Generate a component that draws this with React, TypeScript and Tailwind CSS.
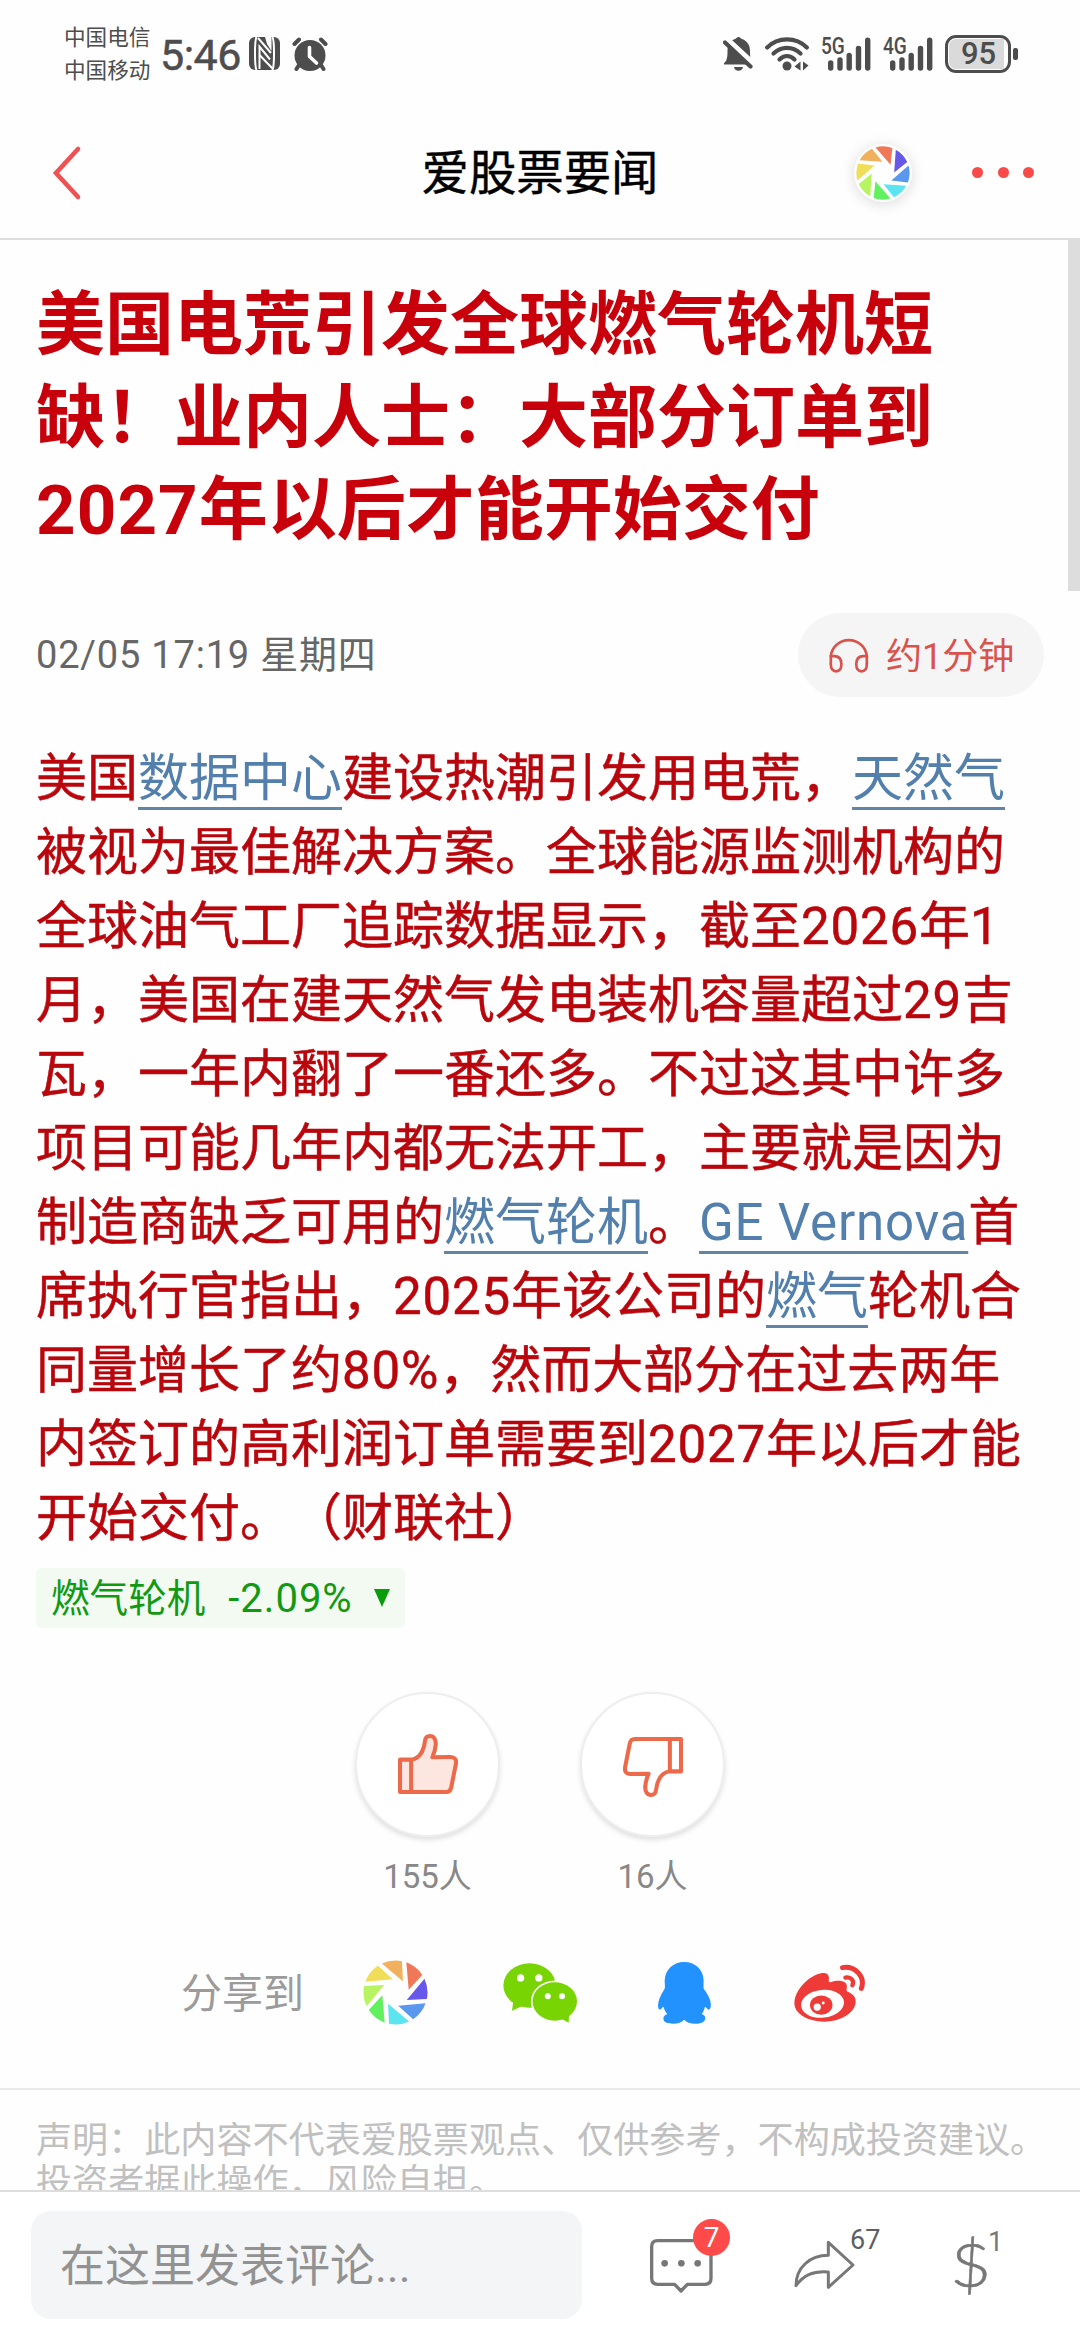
import React from 'react';

interface Segment {
  text: string;
  link?: boolean;
}

const titleLines = [
  '美国电荒引发全球燃气轮机短',
  '缺！业内人士：大部分订单到',
  '2027年以后才能开始交付',
];

const bodyLines: Segment[][] = [
  [
    { text: '美国' },
    { text: '数据中心', link: true },
    { text: '建设热潮引发用电荒，' },
    { text: '天然气', link: true },
  ],
  [{ text: '被视为最佳解决方案。全球能源监测机构的' }],
  [{ text: '全球油气工厂追踪数据显示，截至2026年1' }],
  [{ text: '月，美国在建天然气发电装机容量超过29吉' }],
  [{ text: '瓦，一年内翻了一番还多。不过这其中许多' }],
  [{ text: '项目可能几年内都无法开工，主要就是因为' }],
  [
    { text: '制造商缺乏可用的' },
    { text: '燃气轮机', link: true },
    { text: '。' },
    { text: 'GE Vernova', link: true },
    { text: '首' },
  ],
  [
    { text: '席执行官指出，2025年该公司的' },
    { text: '燃气', link: true },
    { text: '轮机合' },
  ],
  [{ text: '同量增长了约80%，然而大部分在过去两年' }],
  [{ text: '内签订的高利润订单需要到2027年以后才能' }],
  [{ text: '开始交付。（财联社）' }],
];

// latin runs sit a little looser than the chinese text
const Spaced: React.FC<{ text: string }> = ({ text }) => (
  <>
    {text.split(/([A-Za-z0-9% ]+)/).map((part, i) =>
      i % 2 === 1 ? (
        <span key={i} className="tracking-[0.016em]">
          {part}
        </span>
      ) : (
        part
      ),
    )}
  </>
);

// clockwise from the top right blade
const bladeColors = [
  '#f07858',
  '#6858ea',
  '#5a98f0',
  '#5ce4f0',
  '#60f060',
  '#b8f462',
  '#f0de58',
  '#f0b05e',
];

const Shutter: React.FC<{ className?: string; turn?: number }> = ({ className, turn = 0 }) => (
  <svg viewBox="-96 -96 192 192" className={className}>
    {bladeColors.map((color, i) => (
      <path
        key={color}
        d="M32 -89 A95 95 0 0 1 79 -52 L39 -8 Z"
        fill={color}
        transform={`rotate(${i * 45 + turn})`}
      />
    ))}
  </svg>
);

const NfcIcon = () => (
  <svg viewBox="0 0 31 33" className="h-[33px] w-[31px]">
    <rect width="31" height="33" rx="6" fill="#4d4d4d" />
    <g fill="none" stroke="#fff" strokeWidth="2">
      <path d="M7.500 0C6 3 6 8 6 16.500S6 30 7.500 33" />
      <path d="M23.500 0C25 3 25 8 25 16.500S25 30 23.500 33" />
      <path d="M10.500 32V9.500L21 22.500" />
      <path d="M9 1L22 16" />
      <path d="M10.500 18L24 32" />
    </g>
    <path d="M16 0h6.500v14L18 7z" fill="#fff" />
  </svg>
);

const AlarmIcon = () => (
  <svg viewBox="0 0 36 34" className="h-[34px] w-9">
    <g stroke="#4d4d4d" strokeWidth="4" strokeLinecap="round">
      <path d="M2.500 7L7 2.500M33.500 7L29 2.500M7 28L4.500 32M29 28l2.500 4" />
    </g>
    <circle cx="18" cy="18.500" r="15.500" fill="#4d4d4d" />
    <path
      d="M17.500 10.500v9l7 6.500"
      fill="none"
      stroke="#fff"
      strokeWidth="3.600"
      strokeLinecap="round"
      strokeLinejoin="round"
    />
  </svg>
);

const BellOffIcon = () => (
  <svg viewBox="0 0 30 34" className="h-[34px] w-[30px]">
    <path
      d="M15.500 0c1.500 0 2 1.500 3.500 2C24.500 4 27 8.500 27 14c0 6 .5 9 2 12v1.500H1V26c3-2 3.500-6 3.500-12 0-6 2.500-10 7.500-12 1.500-.5 2-2 3.500-2z"
      fill="#4d4d4d"
    />
    <path d="M11 30h9c-.5 2.500-2 3.800-4.500 3.800S11.500 32.500 11 30z" fill="#4d4d4d" />
    <path d="M0 -.5L32 29" stroke="#fff" strokeWidth="7" />
    <path d="M2 5.500L27.500 29.500" stroke="#4d4d4d" strokeWidth="4.200" strokeLinecap="round" />
  </svg>
);

const WifiIcon = () => (
  <svg viewBox="0 0 44 34" className="h-[34px] w-11">
    <g fill="none" stroke="#4d4d4d" strokeWidth="4.200" strokeLinecap="round">
      <path d="M2.200 10.500C13-.3 31-.3 41.800 10.500" />
      <path d="M8.500 16.500c8-7.500 19-7.500 27 0" />
      <path d="M14.500 22.500c4.500-4.500 10.500-4.500 15 0" />
    </g>
    <circle cx="22" cy="29" r="4.500" fill="#4d4d4d" />
    <path d="M35.500 24.500v9L29.500 29.500zM38 24.500v9l5.500-5z" fill="#4d4d4d" />
  </svg>
);

const Signal: React.FC<{ label: string }> = ({ label }) => (
  <div className="relative h-[34px] w-[50px]">
    <span className="absolute -top-[1px] left-0 origin-left scale-x-[0.83] text-[23px] leading-[22px] font-medium text-[#4d4d4d]">
      {label}
    </span>
    <svg viewBox="0 0 50 34" className="absolute inset-0 h-full w-full">
      <g stroke="#4d4d4d" strokeWidth="5.400" strokeLinecap="round">
        <path d="M9.700 26v5M19 23v8M28.200 18.500V31M37.500 11.500V31M46.700 3.200V31" />
      </g>
    </svg>
  </div>
);

const Battery = () => (
  <div className="flex items-center gap-[2px]">
    <div className="h-[38px] w-[66px] rounded-[11px] border-[3px] border-[#4d4d4d] p-[1px]">
      <div className="flex h-full w-[55px] items-center justify-center rounded-l-[7px] bg-[#dadada] pl-1 text-[31px] leading-none font-medium text-[#4d4d4d]">
        95
      </div>
    </div>
    <div className="h-3 w-[5px] rounded-[2px] bg-[#4d4d4d]" />
  </div>
);

const StatusBar = () => (
  <div className="flex h-[107px] shrink-0 items-center pl-[64px] text-[#4d4d4d]">
    <div className="w-[96px] text-[21.600px] leading-[33px]">
      <div>中国电信</div>
      <div>中国移动</div>
    </div>
    <div className="mt-[3px] w-[89px] text-[43px] leading-none -tracking-[0.500px] [-webkit-text-stroke:0.5px]">5:46</div>
    <NfcIcon />
    <div className="ml-3">
      <AlarmIcon />
    </div>
    <div className="mr-[62px] ml-auto flex items-center">
      <BellOffIcon />
      <div className="ml-3">
        <WifiIcon />
      </div>
      <div className="ml-3">
        <Signal label="5G" />
      </div>
      <div className="ml-3">
        <Signal label="4G" />
      </div>
      <div className="ml-3">
        <Battery />
      </div>
    </div>
  </div>
);

const NavBar = () => (
  <div className="grid h-[133px] shrink-0 grid-cols-3 items-center border-b-2 border-[#dddddd]">
    <svg viewBox="0 0 30 56" className="ml-[52px] h-14 w-[30px]">
      <path d="M26 4L4 28l22 24" fill="none" stroke="#f05254" strokeWidth="4.600" strokeLinecap="round" />
    </svg>
    <h1 className="mt-[5px] text-center text-[47.400px] leading-none whitespace-nowrap text-black [-webkit-text-stroke:0.4px]">
      爱股票要闻
    </h1>
    <div className="flex items-center justify-end pr-[46px]">
      <div className="flex size-[58px] items-center justify-center rounded-full bg-white shadow-[0_2px_14px_rgba(0,0,0,0.14)]">
        <Shutter className="size-[54px]" turn={-36} />
      </div>
      <div className="ml-[60px] flex gap-[14.500px]">
        <i className="size-[11px] rounded-full bg-[#f94a4a]" />
        <i className="size-[11px] rounded-full bg-[#f94a4a]" />
        <i className="size-[11px] rounded-full bg-[#f94a4a]" />
      </div>
    </div>
  </div>
);

const HeadphoneIcon = () => (
  <svg viewBox="118 108 120 112" className="h-[37px] w-10">
    <g fill="none" stroke="#d9524c" strokeWidth="8" strokeLinecap="round">
      <path d="M123 192V168a55 55 0 0 1 109 0v24" />
      <path d="M123 169h10c16 0 22 10 22 24 0 14-5 22-16 22s-16-8-16-22" />
      <path d="M232 169h-10c-16 0-22 10-22 24 0 14 5 22 16 22s16-8 16-22" />
    </g>
  </svg>
);

const ThumbIcon: React.FC<{ down?: boolean }> = ({ down }) => (
  <svg viewBox="202 194 178 178" className={down ? 'mt-1.5 size-[60px] rotate-180' : 'size-[60px]'}>
    <path
      d="M243 270C265 266 278 246 282 215C283 204 290 200 297 200C308 200 315 210 314 225C313 240 309 252 304 263L358 262C370 262 376 270 374 281L360 352C358 362 352 366 345 366H208V270Z"
      fill={down ? '#ffffff' : '#fde6e0'}
      stroke="#ec694a"
      strokeWidth="12"
      strokeLinejoin="round"
    />
    <path d="M241 270V366" stroke="#ec694a" strokeWidth="12" />
  </svg>
);

const Vote: React.FC<{ label: string; down?: boolean }> = ({ label, down }) => (
  <div className="flex w-[145px] flex-col items-center">
    <div className="flex size-[145px] items-center justify-center rounded-full border-2 border-[#eeeeee] bg-white shadow-[0_3px_5px_rgba(0,0,0,0.12)]">
      <ThumbIcon down={down} />
    </div>
    <div className="mt-[23px] text-[33px] leading-[33px] text-[#888888]">{label}</div>
  </div>
);

const WechatIcon = () => (
  <svg viewBox="458 42 223 181" className="h-[60px] w-[74px]">
    <g fill="#78d402">
      <ellipse cx="538" cy="110" rx="79" ry="67" />
      <path d="M489 158L485 186L520 170Z" />
    </g>
    <ellipse cx="614" cy="158" rx="72" ry="63" fill="#fff" />
    <g fill="#78d402">
      <ellipse cx="614" cy="158" rx="67" ry="58" />
      <path d="M630 208L656 222L657 198Z" />
    </g>
    <g fill="#fff">
      <circle cx="511" cy="87" r="11" />
      <circle cx="566" cy="87" r="11" />
      <circle cx="593" cy="142" r="9" />
      <circle cx="636" cy="142" r="9" />
    </g>
  </svg>
);

const QqIcon = () => (
  <svg viewBox="53 42 160 188" className="h-[62px] w-[53px]">
    <path
      d="M132 42C165 42 190 65 191 97C191 105 190 112 191 122C198 132 213 152 213 172C213 183 209 188 205 186C201 184 197 178 195 178C193 186 190 194 185 200C193 203 197 208 196 214C194 225 182 229 166 229C150 229 140 225 132 217C124 225 114 229 98 229C80 229 70 224 69 214C69 207 74 202 81 200C75 194 72 187 69 178C67 178 63 184 60 186C55 188 52 182 53 172C54 152 66 135 73 122C75 112 72 105 73 97C75 65 99 42 132 42Z"
      fill="#2192ff"
    />
  </svg>
);

const WeiboIcon = () => (
  <svg viewBox="462 45 215 175" className="h-[58px] w-[72px]">
    <path
      d="M550 72C562 71 568 80 566 93C565 99 568 101 573 99C590 94 615 93 620 108C622 116 617 123 621 128C632 132 647 140 647 158C647 192 600 219 552 219C505 219 462 197 462 163C462 138 480 112 500 95C518 79 538 72 550 72Z"
      fill="#ee3b37"
    />
    <ellipse cx="547" cy="165" rx="65" ry="42" fill="#fff" transform="rotate(-6 547 165)" />
    <ellipse cx="543" cy="169" rx="34" ry="29" fill="#ee3b37" />
    <circle cx="531" cy="175" r="11" fill="#fff" />
    <circle cx="549" cy="163" r="4.500" fill="#fff" />
    <g fill="none" stroke="#ee3b37" strokeLinecap="round">
      <path d="M607 56C642 50 678 80 664 119" strokeWidth="15" />
      <path d="M616 86C632 82 644 95 637 109" strokeWidth="13" />
    </g>
  </svg>
);

const Article = () => (
  <div className="relative flex-1 overflow-hidden">
    <div className="absolute top-0 right-0 h-[351px] w-3 bg-[#dddddd]" />

    <h2 className="mt-10 ml-9 text-[69px] leading-[92.500px] font-bold whitespace-nowrap text-[#c7000b]">
      {titleLines.map((line) => (
        <div key={line}>
          <Spaced text={line} />
        </div>
      ))}
    </h2>

    <div className="mt-[55px] flex h-[84px] items-center justify-between pr-9 pl-9">
      <span className="text-[38px] leading-none tracking-[0.800px] text-[#666666]">02/05 17:19 星期四</span>
      <div className="flex h-full w-[246px] items-center rounded-full bg-[#f5f5f5] pl-[31px] text-[36px] leading-none text-[#d9524c]">
        <HeadphoneIcon />
        <span className="mt-1 ml-[17px]">约1分钟</span>
      </div>
    </div>

    <div className="mt-[45px] ml-9 text-[51px] leading-[74px] whitespace-nowrap text-[#b9060d] [-webkit-text-stroke:0.5px]">
      {bodyLines.map((line, i) => (
        <div key={i}>
          {line.map((seg) =>
            seg.link ? (
              <a
                key={seg.text}
                className="text-[#527fac] underline decoration-[#6284a6] decoration-[2.500px] underline-offset-[11px] [-webkit-text-stroke:0px]"
              >
                <Spaced text={seg.text} />
              </a>
            ) : (
              <Spaced key={seg.text} text={seg.text} />
            ),
          )}
        </div>
      ))}
    </div>

    <div className="mt-3 ml-9 flex h-[60px] w-[369px] items-center rounded-[6px] bg-[#f2faf2] pl-[15px] text-[38.600px] leading-none text-[#129912]">
      <span className="mt-[3px]">燃气轮机</span>
      <span className="mt-[3px] ml-[23px] text-[40px] tracking-[1px]">-2.09%</span>
      <svg viewBox="0 0 16 18" className="mr-[15px] ml-auto h-[18px] w-4">
        <path d="M0 0h16L8 18z" fill="#0a9c0a" />
      </svg>
    </div>

    <div className="mt-[64px] flex justify-center gap-20">
      <Vote label="155人" />
      <Vote label="16人" down />
    </div>

    <div className="mt-[67px] flex h-[66px] items-center pl-[181px]">
      <span className="mt-1 w-[182px] text-[41px] leading-none text-[#9b9b9b]">分享到</span>
      <Shutter className="size-[65px]" />
      <div className="ml-[75px]">
        <WechatIcon />
      </div>
      <div className="ml-[81px]">
        <QqIcon />
      </div>
      <div className="ml-[83px]">
        <WeiboIcon />
      </div>
    </div>

    <div className="mt-[62px] border-t-2 border-[#eaeaea] pt-[30px] pl-9 text-[36.100px] leading-[42px] whitespace-nowrap text-[#c0c0c0]">
      <div>声明：此内容不代表爱股票观点、仅供参考，不构成投资建议。</div>
      <div>投资者据此操作，风险自担。</div>
    </div>
  </div>
);

const BottomBar = () => (
  <div className="flex h-[150px] shrink-0 items-start border-t-2 border-[#dddddd] bg-white text-[#777777]">
    <div className="mt-[19px] ml-[31px] flex h-[108px] w-[551px] items-center rounded-[20px] bg-[#f4f5f7] pt-[3px] pl-[29px] text-[45px] leading-none text-[#929292]">
      在这里发表评论...
    </div>

    <div className="relative mt-[46px] ml-[67px]">
      <svg viewBox="147 145 192 165" className="h-[55px] w-16">
        <path
          d="M173 153H315Q333 153 333 171V266Q333 284 315 284H262L243 304L224 284H173Q155 284 155 266V171Q155 153 173 153Z"
          fill="none"
          stroke="#777777"
          strokeWidth="10"
          strokeLinejoin="round"
        />
        <g fill="#777777">
          <circle cx="194" cy="221" r="10" />
          <circle cx="244" cy="221" r="10" />
          <circle cx="293" cy="221" r="10" />
        </g>
      </svg>
      <span className="absolute -top-[19px] left-11 flex size-[37px] items-center justify-center rounded-full bg-[#ff4a4a] text-[28px] leading-none text-white">
        7
      </span>
    </div>

    <div className="relative mt-[48px] ml-[81px]">
      <svg viewBox="583 150 183 150" className="h-[50px] w-[61px]">
        <path
          d="M686 157L760 225L686 292V246C640 242 612 256 589 287C589 233 630 196 686 196Z"
          fill="none"
          stroke="#777777"
          strokeWidth="9"
          strokeLinejoin="round"
        />
      </svg>
      <span className="absolute -top-[14px] left-14 text-[27px] leading-[28px] text-[#5f5f5f]">67</span>
    </div>

    <div className="relative mt-[36px] ml-[95px]">
      <span className="block origin-left scale-x-[1.15] font-['Lato'] text-[62px] leading-[70px] font-light [-webkit-text-stroke:0.5px]">
        $
      </span>
      <span className="absolute top-0 left-[38px] text-[27px] leading-[28px]">1</span>
    </div>
  </div>
);

export default function App() {
  return (
    <div className="flex h-[2340px] w-[1080px] flex-col overflow-hidden bg-[#fefefe] font-['Roboto','Noto_Sans_CJK_SC',sans-serif] [text-spacing-trim:space-all]">
      <StatusBar />
      <NavBar />
      <Article />
      <BottomBar />
    </div>
  );
}
